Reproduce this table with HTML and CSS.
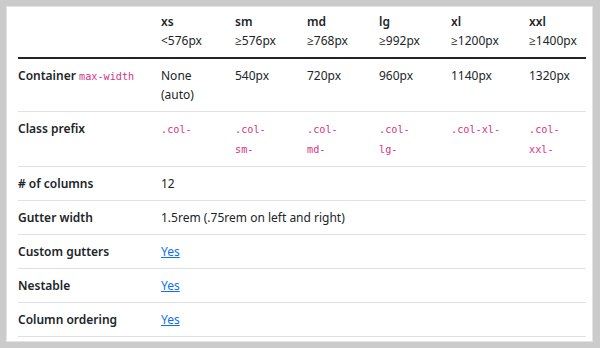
FILE: index.html
```html
<!DOCTYPE html>
<html lang="en">
<head>
<meta charset="utf-8">
<title>Grid options</title>
<link rel="stylesheet" href="styles.css">
</head>
<body>
<div class="card">
  <table class="grid-table">
    <colgroup>
      <col class="c-label">
      <col class="c-xs">
      <col class="c-sm">
      <col class="c-md">
      <col class="c-lg">
      <col class="c-xl">
      <col class="c-xxl">
    </colgroup>
    <thead>
      <tr>
        <th></th>
        <th>xs<br><span class="bp">&lt;576px</span></th>
        <th>sm<br><span class="bp">&ge;576px</span></th>
        <th>md<br><span class="bp">&ge;768px</span></th>
        <th>lg<br><span class="bp">&ge;992px</span></th>
        <th>xl<br><span class="bp">&ge;1200px</span></th>
        <th>xxl<br><span class="bp">&ge;1400px</span></th>
      </tr>
    </thead>
    <tbody>
      <tr>
        <th scope="row">Container <code>max-width</code></th>
        <td>None<br>(auto)</td>
        <td>540px</td>
        <td>720px</td>
        <td>960px</td>
        <td>1140px</td>
        <td>1320px</td>
      </tr>
      <tr>
        <th scope="row">Class prefix</th>
        <td><code>.col-</code></td>
        <td><code>.col-<br>sm-</code></td>
        <td><code>.col-<br>md-</code></td>
        <td><code>.col-<br>lg-</code></td>
        <td><code>.col-xl-</code></td>
        <td><code>.col-<br>xxl-</code></td>
      </tr>
      <tr>
        <th scope="row"># of columns</th>
        <td colspan="6">12</td>
      </tr>
      <tr>
        <th scope="row">Gutter width</th>
        <td colspan="6">1.5rem (.75rem on left and right)</td>
      </tr>
      <tr>
        <th scope="row">Custom gutters</th>
        <td colspan="6"><a href="#gutters">Yes</a></td>
      </tr>
      <tr>
        <th scope="row">Nestable</th>
        <td colspan="6"><a href="#nesting">Yes</a></td>
      </tr>
      <tr>
        <th scope="row">Column ordering</th>
        <td colspan="6"><a href="#reordering">Yes</a></td>
      </tr>
    </tbody>
  </table>
</div>
</body>
</html>
```

FILE: styles.css
```css
html, body {
  margin: 0;
  padding: 0;
}

body {
  background: #cbcbcb;
  padding: 6px 7px 6px 6px;
  height: 348px;
  box-sizing: border-box;
  font-family: "Noto Sans", "Open Sans", sans-serif;
  font-size: 12px;
  line-height: 19px;
  color: #212529;
}

.card {
  background: #ffffff;
  box-shadow: 0 0 0 1px #e4e4e4 inset;
  height: 336px;
  box-sizing: border-box;
  padding: 0 6px 0 12px;
  overflow: hidden;
}

.grid-table {
  width: 568px;
  border-collapse: collapse;
  table-layout: fixed;
}

.c-label { width: 143px; }
.c-xs { width: 74px; }
.c-sm { width: 72px; }
.c-md { width: 72px; }
.c-lg { width: 72px; }
.c-xl { width: 78px; }
.c-xxl { width: 57px; }

.grid-table th,
.grid-table td {
  text-align: left;
  vertical-align: top;
  padding: 7px 8px 7px 0;
  border-bottom: 1px solid #dee2e6;
}

.grid-table th {
  font-weight: 600;
}

.grid-table thead th {
  padding-top: 6px;
  padding-bottom: 7px;
  border-bottom: 2px solid #212529;
  white-space: nowrap;
}

.bp {
  font-weight: 400;
}

code {
  font-family: "DejaVu Sans Mono", "Liberation Mono", monospace;
  font-size: 10.2px;
  color: #d63384;
  font-weight: 400;
}

a {
  color: #0d6efd;
  text-decoration: underline;
}
```
